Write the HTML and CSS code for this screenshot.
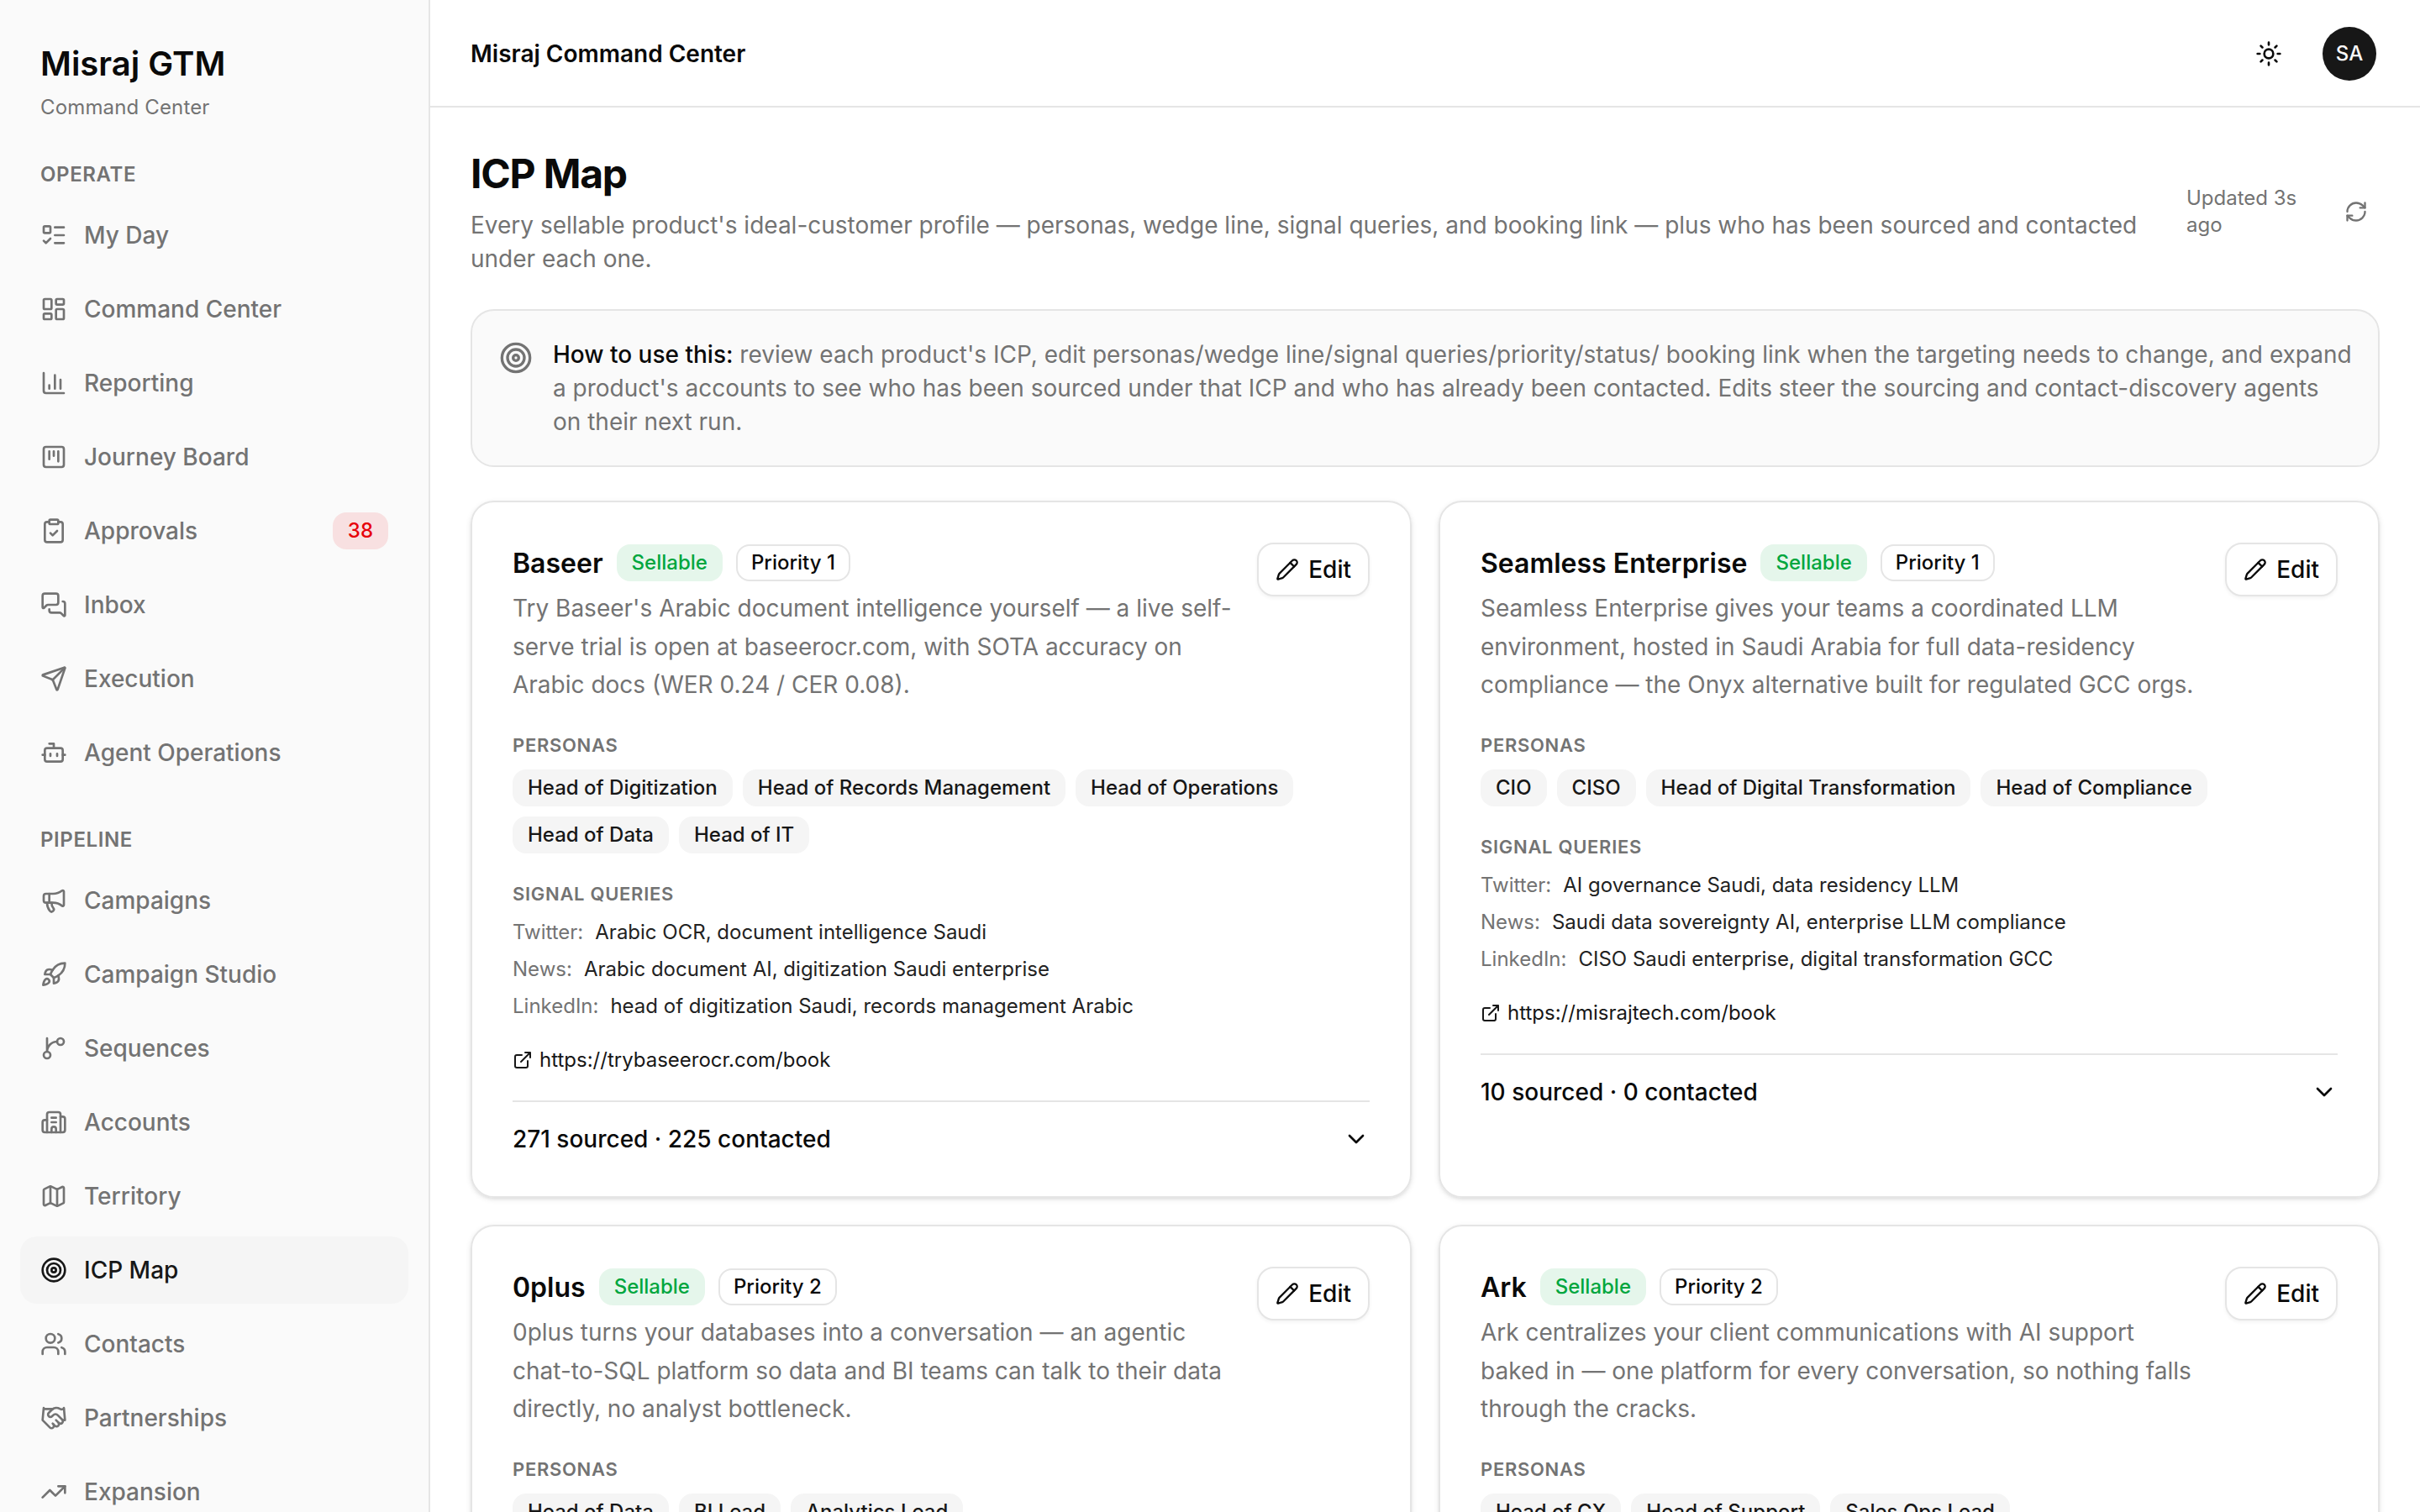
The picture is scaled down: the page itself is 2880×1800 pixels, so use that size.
FILE: index.html
```html
<!DOCTYPE html>
<html lang="en">
<head>
  <meta charset="UTF-8" />
  <title>Misraj Command Center</title>
  <link rel="stylesheet" href="styles.css">
</head>
<body>

  <!-- Icon sprite -->
  <svg class="sprite" aria-hidden="true">
    <symbol id="i-todo" viewBox="0 0 24 24"><path d="M13 5h8M13 12h8M13 19h8M3 17l2 2 4-4"/><rect x="3" y="4" width="6" height="6" rx="1"/></symbol>
    <symbol id="i-dashboard" viewBox="0 0 24 24"><rect x="3" y="3" width="7" height="9" rx="1"/><rect x="14" y="3" width="7" height="5" rx="1"/><rect x="14" y="12" width="7" height="9" rx="1"/><rect x="3" y="16" width="7" height="5" rx="1"/></symbol>
    <symbol id="i-chart" viewBox="0 0 24 24"><path d="M3 3v16a2 2 0 0 0 2 2h16M18 17V9M13 17V5M8 17v-3"/></symbol>
    <symbol id="i-kanban" viewBox="0 0 24 24"><rect x="3" y="3" width="18" height="18" rx="2"/><path d="M8 7v7M12 7v4M16 7v9"/></symbol>
    <symbol id="i-clipboard" viewBox="0 0 24 24"><rect x="8" y="2" width="8" height="4" rx="1"/><path d="M16 4h2a2 2 0 0 1 2 2v14a2 2 0 0 1-2 2H6a2 2 0 0 1-2-2V6a2 2 0 0 1 2-2h2M9 14l2 2 4-4"/></symbol>
    <symbol id="i-messages" viewBox="0 0 24 24"><path d="M16 10a2 2 0 0 1-2 2H6.828a2 2 0 0 0-1.414.586l-2.202 2.202A.71.71 0 0 1 2 14.286V4a2 2 0 0 1 2-2h10a2 2 0 0 1 2 2z"/><path d="M20 9a2 2 0 0 1 2 2v10.286a.71.71 0 0 1-1.212.502l-2.202-2.202A2 2 0 0 0 17.172 19H10a2 2 0 0 1-2-2v-1"/></symbol>
    <symbol id="i-send" viewBox="0 0 24 24"><path d="M14.536 21.686a.5.5 0 0 0 .937-.024l6.5-19a.496.496 0 0 0-.635-.635l-19 6.5a.5.5 0 0 0-.024.937l7.93 3.18a2 2 0 0 1 1.112 1.11z"/><path d="m21.854 2.147-10.94 10.939"/></symbol>
    <symbol id="i-bot" viewBox="0 0 24 24"><path d="M12 8V4H8"/><rect x="4" y="8" width="16" height="12" rx="2"/><path d="M2 14h2M20 14h2M15 13v2M9 13v2"/></symbol>
    <symbol id="i-megaphone" viewBox="0 0 24 24"><path d="M11 6a13 13 0 0 0 8.4-2.8A1 1 0 0 1 21 4v12a1 1 0 0 1-1.6.8A13 13 0 0 0 11 14H5a2 2 0 0 1-2-2V8a2 2 0 0 1 2-2z"/><path d="M6 14a12 12 0 0 0 2.4 7.2 2 2 0 0 0 3.2-2.4A8 8 0 0 1 10 14M8 6v8"/></symbol>
    <symbol id="i-rocket" viewBox="0 0 24 24"><path d="M12 15v5s3.03-.55 4-2c1.08-1.62 0-5 0-5"/><path d="M4.5 16.5c-1.5 1.26-2 5-2 5s3.74-.5 5-2c.71-.84.7-2.13-.09-2.91a2.18 2.18 0 0 0-2.91-.09"/><path d="M9 12a22 22 0 0 1 2-3.95A12.88 12.88 0 0 1 22 2c0 2.72-.78 7.5-6 11a22.4 22.4 0 0 1-4 2z"/><path d="M9 12H4s.55-3.03 2-4c1.62-1.08 5 .05 5 .05"/></symbol>
    <symbol id="i-branch" viewBox="0 0 24 24"><path d="M15 6a9 9 0 0 0-9 9V3"/><circle cx="18" cy="6" r="3"/><circle cx="6" cy="18" r="3"/></symbol>
    <symbol id="i-building" viewBox="0 0 24 24"><path d="M10 12h4M10 8h4M14 21v-3a2 2 0 0 0-4 0v3"/><path d="M6 10H4a2 2 0 0 0-2 2v7a2 2 0 0 0 2 2h16a2 2 0 0 0 2-2V9a2 2 0 0 0-2-2h-2"/><path d="M6 21V5a2 2 0 0 1 2-2h8a2 2 0 0 1 2 2v16"/></symbol>
    <symbol id="i-map" viewBox="0 0 24 24"><path d="M14.106 5.553a2 2 0 0 0 1.788 0l3.659-1.83A1 1 0 0 1 21 4.619v12.764a1 1 0 0 1-.553.894l-4.553 2.277a2 2 0 0 1-1.788 0l-4.212-2.106a2 2 0 0 0-1.788 0l-3.659 1.83A1 1 0 0 1 3 19.381V6.618a1 1 0 0 1 .553-.894l4.553-2.277a2 2 0 0 1 1.788 0z"/><path d="M15 5.764v15M9 3.236v15"/></symbol>
    <symbol id="i-target" viewBox="0 0 24 24"><circle cx="12" cy="12" r="10"/><circle cx="12" cy="12" r="6"/><circle cx="12" cy="12" r="2"/></symbol>
    <symbol id="i-users" viewBox="0 0 24 24"><path d="M16 21v-2a4 4 0 0 0-4-4H6a4 4 0 0 0-4 4v2M16 3.128a4 4 0 0 1 0 7.744M22 21v-2a4 4 0 0 0-3-3.87"/><circle cx="9" cy="7" r="4"/></symbol>
    <symbol id="i-handshake" viewBox="0 0 24 24"><path d="m11 17 2 2a1 1 0 1 0 3-3"/><path d="m14 14 2.5 2.5a1 1 0 1 0 3-3l-3.88-3.88a3 3 0 0 0-4.24 0l-.88.88a1 1 0 1 1-3-3l2.81-2.81a5.79 5.79 0 0 1 7.06-.87l.47.28a2 2 0 0 0 1.42.25L21 4"/><path d="m21 3 1 11h-2M3 3 2 14l6.5 6.5a1 1 0 1 0 3-3M3 4h8"/></symbol>
    <symbol id="i-trending" viewBox="0 0 24 24"><path d="M16 7h6v6"/><path d="m22 7-8.5 8.5-5-5L2 17"/></symbol>
    <symbol id="i-sun" viewBox="0 0 24 24"><circle cx="12" cy="12" r="4"/><path d="M12 2v2M12 20v2M4.93 4.93l1.41 1.41M17.66 17.66l1.41 1.41M2 12h2M20 12h2M6.34 17.66l-1.41 1.41M19.07 4.93l-1.41 1.41"/></symbol>
    <symbol id="i-refresh" viewBox="0 0 24 24"><path d="M3 12a9 9 0 0 1 9-9 9.75 9.75 0 0 1 6.74 2.74L21 8"/><path d="M21 3v5h-5"/><path d="M21 12a9 9 0 0 1-9 9 9.75 9.75 0 0 1-6.74-2.74L3 16"/><path d="M8 16H3v5"/></symbol>
    <symbol id="i-pencil" viewBox="0 0 24 24"><path d="M21.174 6.812a1 1 0 0 0-3.986-3.987L3.842 16.174a2 2 0 0 0-.5.83l-1.321 4.352a.5.5 0 0 0 .623.622l4.353-1.32a2 2 0 0 0 .83-.497z"/><path d="m15 5 4 4"/></symbol>
    <symbol id="i-external" viewBox="0 0 24 24"><path d="M15 3h6v6M10 14 21 3M18 13v6a2 2 0 0 1-2 2H5a2 2 0 0 1-2-2V8a2 2 0 0 1 2-2h6"/></symbol>
    <symbol id="i-chevron" viewBox="0 0 24 24"><path d="m6 9 6 6 6-6"/></symbol>
  </svg>

  <aside class="sidebar">
    <div class="brand">
      <div class="brand-name">Misraj GTM</div>
      <div class="brand-sub">Command Center</div>
    </div>

    <nav class="nav-group">
      <div class="nav-label">Operate</div>
      <a class="nav-item"><svg class="icon"><use href="#i-todo"/></svg>My Day</a>
      <a class="nav-item"><svg class="icon"><use href="#i-dashboard"/></svg>Command Center</a>
      <a class="nav-item"><svg class="icon"><use href="#i-chart"/></svg>Reporting</a>
      <a class="nav-item"><svg class="icon"><use href="#i-kanban"/></svg>Journey Board</a>
      <a class="nav-item"><svg class="icon"><use href="#i-clipboard"/></svg>Approvals<span class="badge badge-red">38</span></a>
      <a class="nav-item"><svg class="icon"><use href="#i-messages"/></svg>Inbox</a>
      <a class="nav-item"><svg class="icon"><use href="#i-send"/></svg>Execution</a>
      <a class="nav-item"><svg class="icon"><use href="#i-bot"/></svg>Agent Operations</a>
    </nav>

    <nav class="nav-group">
      <div class="nav-label">Pipeline</div>
      <a class="nav-item"><svg class="icon"><use href="#i-megaphone"/></svg>Campaigns</a>
      <a class="nav-item"><svg class="icon"><use href="#i-rocket"/></svg>Campaign Studio</a>
      <a class="nav-item"><svg class="icon"><use href="#i-branch"/></svg>Sequences</a>
      <a class="nav-item"><svg class="icon"><use href="#i-building"/></svg>Accounts</a>
      <a class="nav-item"><svg class="icon"><use href="#i-map"/></svg>Territory</a>
      <a class="nav-item active"><svg class="icon"><use href="#i-target"/></svg>ICP Map</a>
      <a class="nav-item"><svg class="icon"><use href="#i-users"/></svg>Contacts</a>
      <a class="nav-item"><svg class="icon"><use href="#i-handshake"/></svg>Partnerships</a>
      <a class="nav-item"><svg class="icon"><use href="#i-trending"/></svg>Expansion</a>
    </nav>
  </aside>

  <div class="content">
    <header class="topbar">
      <div class="topbar-title">Misraj Command Center</div>
      <div class="topbar-actions">
        <svg class="icon"><use href="#i-sun"/></svg>
        <div class="avatar">SA</div>
      </div>
    </header>

    <main class="main">
      <div class="page-head">
        <div class="page-intro">
          <h1>ICP Map</h1>
          <p>Every sellable product's ideal-customer profile — personas, wedge line, signal queries, and booking link — plus who has been sourced and contacted under each one.</p>
        </div>
        <div class="updated">Updated 3s ago</div>
        <div class="refresh"><svg class="icon icon-md"><use href="#i-refresh"/></svg></div>
      </div>

      <div class="howto">
        <svg class="icon icon-lg"><use href="#i-target"/></svg>
        <p><strong>How to use this:</strong> review each product's ICP, edit personas/wedge line/signal queries/priority/status/ booking link when the targeting needs to change, and expand a product's accounts to see who has been sourced under that ICP and who has already been contacted. Edits steer the sourcing and contact-discovery agents on their next run.</p>
      </div>

      <div class="cards">
        <section class="card">
          <div class="card-head">
            <div class="card-info">
              <div class="card-title"><h3>Baseer</h3><span class="badge badge-green">Sellable</span><span class="badge badge-outline">Priority 1</span></div>
              <p class="card-desc">Try Baseer's Arabic document intelligence yourself — a live self-serve trial is open at baseerocr.com, with SOTA accuracy on Arabic docs (WER 0.24 / CER 0.08).</p>
            </div>
            <button class="btn-edit"><svg class="icon icon-md"><use href="#i-pencil"/></svg>Edit</button>
          </div>
          <div class="block">
            <div class="label">Personas</div>
            <div class="tags">
              <span class="badge">Head of Digitization</span>
              <span class="badge">Head of Records Management</span>
              <span class="badge">Head of Operations</span>
              <span class="badge">Head of Data</span>
              <span class="badge">Head of IT</span>
            </div>
          </div>
          <div class="block">
            <div class="label">Signal queries</div>
            <div class="query"><span>Twitter:</span>Arabic OCR, document intelligence Saudi</div>
            <div class="query"><span>News:</span>Arabic document AI, digitization Saudi enterprise</div>
            <div class="query"><span>LinkedIn:</span>head of digitization Saudi, records management Arabic</div>
          </div>
          <a class="link"><svg class="icon icon-sm"><use href="#i-external"/></svg>https://trybaseerocr.com/book</a>
          <div class="card-foot">271 sourced · 225 contacted<svg class="icon"><use href="#i-chevron"/></svg></div>
        </section>

        <section class="card">
          <div class="card-head">
            <div class="card-info">
              <div class="card-title"><h3>Seamless Enterprise</h3><span class="badge badge-green">Sellable</span><span class="badge badge-outline">Priority 1</span></div>
              <p class="card-desc">Seamless Enterprise gives your teams a coordinated LLM environment, hosted in Saudi Arabia for full data-residency compliance — the Onyx alternative built for regulated GCC orgs.</p>
            </div>
            <button class="btn-edit"><svg class="icon icon-md"><use href="#i-pencil"/></svg>Edit</button>
          </div>
          <div class="block">
            <div class="label">Personas</div>
            <div class="tags">
              <span class="badge">CIO</span>
              <span class="badge">CISO</span>
              <span class="badge">Head of Digital Transformation</span>
              <span class="badge">Head of Compliance</span>
            </div>
          </div>
          <div class="block">
            <div class="label">Signal queries</div>
            <div class="query"><span>Twitter:</span>AI governance Saudi, data residency LLM</div>
            <div class="query"><span>News:</span>Saudi data sovereignty AI, enterprise LLM compliance</div>
            <div class="query"><span>LinkedIn:</span>CISO Saudi enterprise, digital transformation GCC</div>
          </div>
          <a class="link"><svg class="icon icon-sm"><use href="#i-external"/></svg>https://misrajtech.com/book</a>
          <div class="card-foot">10 sourced · 0 contacted<svg class="icon"><use href="#i-chevron"/></svg></div>
        </section>

        <section class="card">
          <div class="card-head">
            <div class="card-info">
              <div class="card-title"><h3>0plus</h3><span class="badge badge-green">Sellable</span><span class="badge badge-outline">Priority 2</span></div>
              <p class="card-desc">0plus turns your databases into a conversation — an agentic chat-to-SQL platform so data and BI teams can talk to their data directly, no analyst bottleneck.</p>
            </div>
            <button class="btn-edit"><svg class="icon icon-md"><use href="#i-pencil"/></svg>Edit</button>
          </div>
          <div class="block">
            <div class="label">Personas</div>
            <div class="tags">
              <span class="badge">Head of Data</span>
              <span class="badge">BI Lead</span>
              <span class="badge">Analytics Lead</span>
            </div>
          </div>
        </section>

        <section class="card">
          <div class="card-head">
            <div class="card-info">
              <div class="card-title"><h3>Ark</h3><span class="badge badge-green">Sellable</span><span class="badge badge-outline">Priority 2</span></div>
              <p class="card-desc">Ark centralizes your client communications with AI support baked in — one platform for every conversation, so nothing falls through the cracks.</p>
            </div>
            <button class="btn-edit"><svg class="icon icon-md"><use href="#i-pencil"/></svg>Edit</button>
          </div>
          <div class="block">
            <div class="label">Personas</div>
            <div class="tags">
              <span class="badge">Head of CX</span>
              <span class="badge">Head of Support</span>
              <span class="badge">Sales Ops Lead</span>
            </div>
          </div>
        </section>
      </div>
    </main>
  </div>

</body>
</html>
```

FILE: styles.css
```css
* {
  box-sizing: border-box;
}

body {
  margin: 0;
  height: 100vh;
  overflow: hidden;
  display: flex;
  background: #fff;
  color: #0a0a0a;
  font-family: Inter, "Liberation Sans", sans-serif;
  font-size: 28px;
  line-height: 40px;
}

h1, h3, p {
  margin: 0;
}

.sprite {
  display: none;
}

.icon {
  width: 32px;
  height: 32px;
  flex-shrink: 0;
  fill: none;
  stroke: currentColor;
  stroke-width: 2;
  stroke-linecap: round;
  stroke-linejoin: round;
}

.icon-sm {
  width: 24px;
  height: 24px;
}

.icon-md {
  width: 28px;
  height: 28px;
}

.icon-lg {
  width: 40px;
  height: 40px;
}

/* Sidebar */
.sidebar {
  width: 512px;
  flex-shrink: 0;
  padding: 48px 24px 0;
  background: #fafafa;
  border-right: 2px solid #e5e5e5;
  overflow: hidden;
}

.brand {
  padding: 0 24px;
  margin-bottom: 48px;
}

.brand-name {
  font-size: 40px;
  font-weight: 600;
  line-height: 56px;
  margin-bottom: 8px;
}

.brand-sub {
  font-size: 24px;
  line-height: 32px;
  letter-spacing: 0.15px;
  color: #737373;
}

.nav-group {
  display: flex;
  flex-direction: column;
  gap: 8px;
  margin-bottom: 48px;
}

.nav-label {
  padding: 0 24px;
  margin-bottom: 8px;
  font-size: 24px;
  font-weight: 600;
  line-height: 32px;
  letter-spacing: 0.025em;
  text-transform: uppercase;
  color: #737373;
}

.nav-item {
  display: flex;
  align-items: center;
  gap: 20px;
  height: 80px;
  padding: 0 24px;
  border-radius: 20px;
  font-weight: 500;
  color: #737373;
}

.nav-item.active {
  background: #f5f5f5;
  color: #171717;
}

.nav-item .badge {
  margin-left: auto;
}

/* Badges */
.badge {
  height: 44px;
  padding: 4px 16px;
  border: 2px solid transparent;
  border-radius: 16px;
  background: #f5f5f5;
  color: #171717;
  font-size: 24px;
  font-weight: 500;
  line-height: 32px;
  white-space: nowrap;
}

.badge-red {
  background: rgba(231, 0, 11, 0.1);
  color: #e7000b;
}

.badge-green {
  background: rgba(0, 166, 62, 0.1);
  color: #00a63e;
}

.badge-outline {
  background: transparent;
  border-color: #e5e5e5;
  color: #0a0a0a;
}

/* Top bar */
.content {
  flex: 1;
  min-width: 0;
}

.topbar {
  display: flex;
  align-items: center;
  justify-content: space-between;
  height: 128px;
  padding: 0 52px 0 48px;
  border-bottom: 2px solid #e5e5e5;
}

.topbar-title {
  padding-top: 2px;
  font-weight: 600;
}

.topbar-actions {
  display: flex;
  align-items: center;
  gap: 48px;
  padding-top: 2px;
}

.avatar {
  width: 64px;
  height: 64px;
  border-radius: 50%;
  background: #171717;
  color: #fafafa;
  font-size: 24px;
  font-weight: 500;
  line-height: 64px;
  text-align: center;
}

/* Page */
.main {
  display: flex;
  flex-direction: column;
  gap: 40px;
  padding: 48px;
}

.page-head {
  display: flex;
  align-items: center;
}

.page-intro {
  flex: 1;
  margin-right: 32px;
  color: #737373;
}

.page-intro h1 {
  margin-bottom: 10px;
  font-size: 48px;
  font-weight: 700;
  line-height: 62px;
  letter-spacing: -0.025em;
  color: #0a0a0a;
}

.updated {
  width: 158px;
  font-size: 24px;
  line-height: 32px;
  color: #737373;
}

.refresh {
  display: flex;
  align-items: center;
  justify-content: center;
  width: 56px;
  height: 56px;
  margin-left: 16px;
  color: #737373;
}

.howto {
  display: flex;
  gap: 24px;
  padding: 32px 30px 32px 32px;
  border: 2px solid #e5e5e5;
  border-radius: 28px;
  background: #fafafa;
  color: #737373;
}

.howto .icon {
  margin-top: 4px;
}

.howto strong {
  font-weight: 500;
  color: #0a0a0a;
}

/* Product cards */
.cards {
  display: grid;
  grid-template-columns: 1fr 1fr;
  gap: 32px;
}

.card {
  display: flex;
  flex-direction: column;
  gap: 32px;
  padding: 48px;
  border: 2px solid #e5e5e5;
  border-radius: 28px;
  box-shadow: 0 2px 6px rgba(0, 0, 0, 0.1), 0 2px 4px -2px rgba(0, 0, 0, 0.1);
}

.card-head {
  display: flex;
  align-items: flex-start;
  gap: 24px;
}

.card-info {
  flex: 1;
}

.card-title {
  display: flex;
  align-items: center;
  gap: 16px;
  height: 48px;
  margin-bottom: 8px;
}

.card-title h3 {
  padding-top: 2px;
  font-size: 32px;
  font-weight: 600;
  line-height: 48px;
}

.card-desc {
  line-height: 45.5px;
  color: #737373;
}

.btn-edit {
  display: flex;
  align-items: center;
  gap: 11px;
  height: 64px;
  padding: 0 20px;
  border: 2px solid #e5e5e5;
  border-radius: 20px;
  background: #fff;
  box-shadow: 0 2px 4px rgba(0, 0, 0, 0.05);
  color: #0a0a0a;
  font: inherit;
  font-weight: 500;
}

.block {
  display: flex;
  flex-direction: column;
  gap: 12px;
}

.label {
  margin-bottom: 1px;
  font-size: 22px;
  font-weight: 600;
  line-height: 32px;
  letter-spacing: 0.7px;
  text-transform: uppercase;
  color: #737373;
}

.tags {
  display: flex;
  flex-wrap: wrap;
  gap: 12px;
}

.query {
  padding-top: 1px;
  font-size: 24px;
  line-height: 31px;
  color: #222;
}

.query span {
  margin-right: 14px;
  color: #737373;
}

.link {
  display: flex;
  align-items: center;
  gap: 8px;
  height: 33.5px;
  padding-top: 1px;
  font-size: 24px;
  color: #171717;
}

.card-foot {
  display: flex;
  align-items: center;
  justify-content: space-between;
  padding-top: 24px;
  border-top: 2px solid #e5e5e5;
  font-weight: 500;
}
```
